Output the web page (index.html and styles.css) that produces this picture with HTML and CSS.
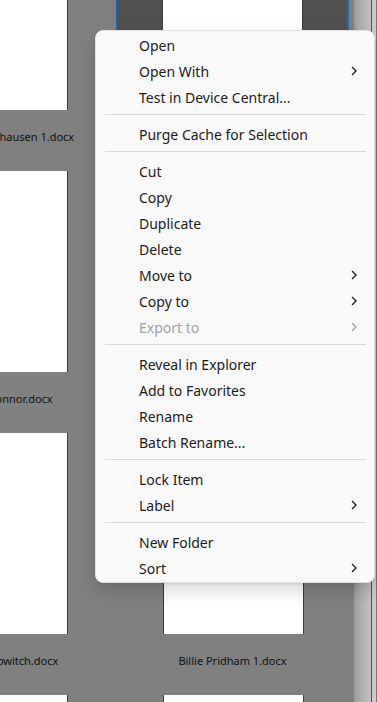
FILE: index.html
```html
<!DOCTYPE html>
<html>
<head>
<meta charset="utf-8">
<link rel="stylesheet" href="styles.css">
</head>
<body>
<div class="window">
  <div class="content">
    <div class="grid">
      <div class="cell"><div class="thumb"></div><div class="name">Friederike Oberhausen 1.docx</div></div>
      <div class="cell selected"><div class="thumb"></div><div class="name"></div></div>

      <div class="cell"><div class="thumb"></div><div class="name">Aisling O'Connor.docx</div></div>
      <div class="cell"><div class="thumb"></div><div class="name"></div></div>

      <div class="cell"><div class="thumb"></div><div class="name">Tanya Rabinowitch.docx</div></div>
      <div class="cell"><div class="thumb"></div><div class="name">Billie Pridham 1.docx</div></div>

      <div class="cell"><div class="thumb"></div><div class="name"></div></div>
      <div class="cell"><div class="thumb"></div><div class="name"></div></div>
    </div>
  </div>
  <div class="scrollbar">
    <div class="track"></div>
    <div class="edge"></div>
    <div class="rail"></div>
    <div class="edge2"></div>
  </div>
</div>

<ul class="menu">
  <li class="item"><span>Open</span></li>
  <li class="item"><span>Open With</span><svg class="chev" viewBox="0 0 6 10" width="6" height="10"><polyline points="1,1 5,5 1,9"/></svg></li>
  <li class="item"><span>Test in Device Central...</span></li>
  <li class="sep"></li>
  <li class="item"><span>Purge Cache for Selection</span></li>
  <li class="sep"></li>
  <li class="item"><span>Cut</span></li>
  <li class="item"><span>Copy</span></li>
  <li class="item"><span>Duplicate</span></li>
  <li class="item"><span>Delete</span></li>
  <li class="item"><span>Move to</span><svg class="chev" viewBox="0 0 6 10" width="6" height="10"><polyline points="1,1 5,5 1,9"/></svg></li>
  <li class="item"><span>Copy to</span><svg class="chev" viewBox="0 0 6 10" width="6" height="10"><polyline points="1,1 5,5 1,9"/></svg></li>
  <li class="item disabled"><span>Export to</span><svg class="chev" viewBox="0 0 6 10" width="6" height="10"><polyline points="1,1 5,5 1,9"/></svg></li>
  <li class="sep"></li>
  <li class="item"><span>Reveal in Explorer</span></li>
  <li class="item"><span>Add to Favorites</span></li>
  <li class="item"><span>Rename</span></li>
  <li class="item"><span>Batch Rename...</span></li>
  <li class="sep"></li>
  <li class="item"><span>Lock Item</span></li>
  <li class="item"><span>Label</span><svg class="chev" viewBox="0 0 6 10" width="6" height="10"><polyline points="1,1 5,5 1,9"/></svg></li>
  <li class="sep"></li>
  <li class="item"><span>New Folder</span></li>
  <li class="item"><span>Sort</span><svg class="chev" viewBox="0 0 6 10" width="6" height="10"><polyline points="1,1 5,5 1,9"/></svg></li>
</ul>
</body>
</html>
```

FILE: styles.css
```css
html, body {
  margin: 0;
  padding: 0;
  width: 377px;
  height: 702px;
  overflow: hidden;
  font-family: "Segoe UI", "Noto Sans", sans-serif;
}

.window {
  display: flex;
  width: 377px;
  height: 702px;
}

.content {
  flex: 0 0 354px;
  height: 702px;
  overflow: hidden;
  background: #808080;
}

.grid {
  display: grid;
  grid-template-columns: repeat(2, 233px);
  grid-auto-rows: 262px;
  column-gap: 3px;
  margin-top: -91px;
  margin-left: -120px;
}

.cell {
  display: flex;
  flex-direction: column;
  align-items: center;
  box-sizing: border-box;
}

.cell.selected {
  background: #505050;
  border-left: 1px solid #1b6db4;
  border-right: 2px solid #1b6db4;
}

.thumb {
  width: 139px;
  height: 201px;
  background: #ffffff;
  border-left: 1px solid #3c3c3c;
  border-right: 1px solid #3c3c3c;
  flex: 0 0 auto;
  margin-left: 1px;
}

.cell.selected .thumb {
  margin-left: 0;
}

.name {
  margin-top: 18px;
  height: 17px;
  font-size: 11px;
  line-height: 17px;
  color: #111111;
  white-space: nowrap;
}

.scrollbar {
  flex: 0 0 23px;
  display: flex;
  height: 702px;
}

.track {
  flex: 1;
  background: linear-gradient(to right, #9c9c9c, #b6b6b6 60%, #c2c2c2);
}

.edge {
  width: 1px;
  background: #4e4e4e;
}

.rail {
  width: 4px;
  background: #cbcbcb;
}

.edge2 {
  width: 1px;
  background: #777777;
}

.menu {
  position: absolute;
  left: 95px;
  top: 30px;
  width: 280px;
  box-sizing: border-box;
  margin: 0;
  padding: 1px 0 1px;
  list-style: none;
  background: #f9f9f9;
  border: 1px solid #e2e2e2;
  border-radius: 8px;
  box-shadow: 0 8px 18px rgba(0, 0, 0, 0.16), 0 1px 3px rgba(0, 0, 0, 0.08);
}

.item {
  display: flex;
  align-items: center;
  justify-content: space-between;
  height: 26px;
  padding: 0 17px 0 43px;
  font-size: 14px;
  color: #1b1b1b;
}

.item.disabled {
  color: #a3a3a3;
}

.chev {
  fill: none;
  stroke: currentColor;
  stroke-width: 1.3;
}

.sep {
  height: 1px;
  margin: 4px 8px 6px 9px;
  background: #d9d9d9;
}
```
